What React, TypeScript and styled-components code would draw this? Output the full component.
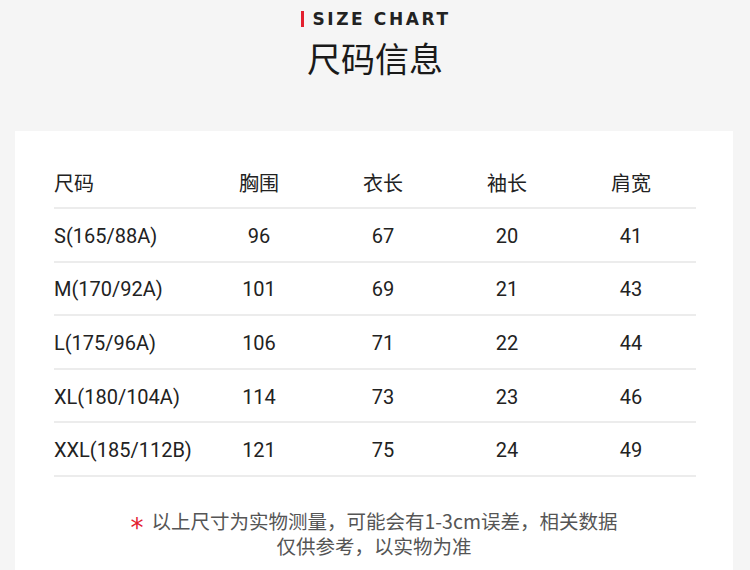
import styled, { createGlobalStyle } from 'styled-components';

const GlobalStyle = createGlobalStyle`
  body {
    margin: 0;
    background: #f5f5f5;
    font-family: Roboto, "Noto Sans CJK SC", sans-serif;
  }
`;

const Page = styled.div`
  width: 750px;
  height: 570px;
  overflow: hidden;
  background: #f5f5f5;
`;

const Header = styled.header`
  display: flex;
  flex-direction: column;
  align-items: center;
  padding-top: 8px;
  height: 131px;
  box-sizing: border-box;
`;

const Eyebrow = styled.div`
  display: flex;
  align-items: center;
  gap: 8px;
  font-family: "DejaVu Sans", "Liberation Sans", sans-serif;
  font-weight: bold;
  font-size: 17px;
  letter-spacing: 2.6px;
  color: #222;
  line-height: 22px;
  margin-left: 2px;
`;

const RedBar = styled.span`
  width: 3px;
  height: 16px;
  background: #e3202e;
`;

const Title = styled.h1`
  margin: 6px 0 0;
  font-family: "Noto Sans CJK SC", sans-serif;
  font-weight: 400;
  font-size: 34px;
  line-height: 44px;
  color: #1a1a1a;
`;

const Card = styled.section`
  margin-left: 15px;
  width: 718px;
  height: 439px;
  background: #fff;
  padding: 25px 0 0 39px;
  box-sizing: border-box;
`;

const Table = styled.div`
  width: 642px;
`;

const Row = styled.div<{ $head?: boolean }>`
  display: grid;
  grid-template-columns: 143px repeat(4, 124px) 1fr;
  align-items: center;
  height: ${(p) => (p.$head ? '53px' : '53.6px')};
  box-sizing: border-box;
  border-bottom: 2px solid #ececec;
  color: #222;
  font-size: ${(p) => (p.$head ? '20px' : '20px')};
  font-family: ${(p) =>
    p.$head ? '"Noto Sans CJK SC", sans-serif' : 'Roboto, "Noto Sans CJK SC", sans-serif'};
`;

const Cell = styled.div<{ $first?: boolean }>`
  text-align: ${(p) => (p.$first ? 'left' : 'center')};
  line-height: 1;
  padding-top: 2px;
`;

const Note = styled.p`
  margin: 31px 0 0 -39px;
  width: 718px;
  text-align: center;
  font-family: "Noto Sans CJK SC", sans-serif;
  font-size: 19.5px;
  line-height: 25px;
  color: #555;
`;

const Star = styled.span`
  color: #e3202e;
  font-family: "DejaVu Sans", sans-serif;
  font-size: 26px;
  line-height: 0;
  vertical-align: -8px;
  margin-right: 8px;
`;

const headers = ['尺码', '胸围', '衣长', '袖长', '肩宽'];
const rows = [
  ['S(165/88A)', '96', '67', '20', '41'],
  ['M(170/92A)', '101', '69', '21', '43'],
  ['L(175/96A)', '106', '71', '22', '44'],
  ['XL(180/104A)', '114', '73', '23', '46'],
  ['XXL(185/112B)', '121', '75', '24', '49'],
];

export default function App() {
  return (
    <Page>
      <GlobalStyle />
      <Header>
        <Eyebrow>
          <RedBar />
          SIZE CHART
        </Eyebrow>
        <Title>尺码信息</Title>
      </Header>
      <Card>
        <Table>
          <Row $head>
            {headers.map((h, i) => (
              <Cell key={h} $first={i === 0}>
                {h}
              </Cell>
            ))}
          </Row>
          {rows.map((r) => (
            <Row key={r[0]}>
              {r.map((v, i) => (
                <Cell key={i} $first={i === 0}>
                  {v}
                </Cell>
              ))}
            </Row>
          ))}
        </Table>
        <Note>
          <Star>*</Star>以上尺寸为实物测量，可能会有1-3cm误差，相关数据
          <br />
          仅供参考，以实物为准
        </Note>
      </Card>
    </Page>
  );
}
